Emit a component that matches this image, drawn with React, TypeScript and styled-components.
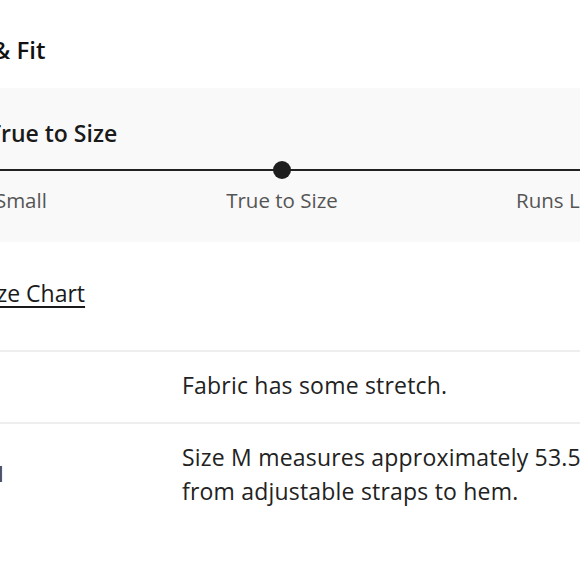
import React from "react";
import styled, { createGlobalStyle } from "styled-components";

const Global = createGlobalStyle`
  html, body { margin: 0; padding: 0; background: #ffffff; overflow: hidden; }
  body { font-family: "Open Sans", Arial, sans-serif; color: #222222; }
`;

const Page = styled.div`
  width: 700px;
  margin-left: -61px;
  padding-top: 34px;
`;

const Title = styled.h2`
  margin: 0;
  padding-left: 2px;
  font-size: 24px;
  line-height: 32px;
  font-weight: 600;
  color: #111111;
`;

const Panel = styled.section`
  margin-top: 22px;
  background: #f9f9f9;
  padding: 31px 49px 30px;
`;

const FitHeading = styled.h3`
  margin: 0;
  font-size: 23px;
  line-height: 28px;
  font-weight: 600;
  color: #1a1a1a;
`;

const Scale = styled.div`
  margin: 14px -32px 0 -46px;
`;

const Track = styled.div`
  height: 18px;
  display: flex;
  align-items: center;
  justify-content: center;
  background: linear-gradient(#222222, #222222) center / 100% 2px no-repeat;
`;

const Knob = styled.span`
  width: 18px;
  height: 18px;
  border-radius: 50%;
  background: #1e1e1e;
`;

const Labels = styled.div`
  margin-top: 9px;
  display: grid;
  grid-template-columns: 1fr 1fr 1fr;
  font-size: 20.5px;
  line-height: 24px;
  color: #555555;
`;

const ScaleLabel = styled.span<{ $align: "left" | "center" | "right" }>`
  text-align: ${(p) => p.$align};
`;

const LinkRow = styled.div`
  margin-top: 37px;
  padding-left: 39px;
`;

const ChartLink = styled.a`
  font-size: 23px;
  line-height: 28px;
  color: #1a1a1a;
  text-decoration: underline;
  text-underline-offset: 4px;
  text-decoration-thickness: 1.5px;
`;

const Table = styled.div`
  margin-top: 43px;
`;

const Row = styled.div`
  display: grid;
  grid-template-columns: 243px 1fr;
  align-items: center;
  border-top: 2px solid #eeeeee;
  padding: 16px 0 20px;
  font-size: 23px;
  line-height: 34px;
  letter-spacing: 0.2px;
  color: #222222;
`;

const RowLabel = styled.div`
  padding-left: 3px;
  font-size: 21px;
  letter-spacing: 0;
  color: #333333;
`;

const RowValue = styled.div``;

export default function App() {
  return (
    <>
      <Global />
      <Page>
        <Title>Size &amp; Fit</Title>
        <Panel>
          <FitHeading>True to Size</FitHeading>
          <Scale>
            <Track>
              <Knob />
            </Track>
            <Labels>
              <ScaleLabel $align="left">Runs Small</ScaleLabel>
              <ScaleLabel $align="center">True to Size</ScaleLabel>
              <ScaleLabel $align="right">Runs Large</ScaleLabel>
            </Labels>
          </Scale>
        </Panel>
        <LinkRow>
          <ChartLink href="#">Size Chart</ChartLink>
        </LinkRow>
        <Table>
          <Row>
            <RowLabel>Feel</RowLabel>
            <RowValue>Fabric has some stretch.</RowValue>
          </Row>
          <Row>
            <RowLabel>Model</RowLabel>
            <RowValue>
              Size M measures approximately 53.5" from adjustable straps to hem.
            </RowValue>
          </Row>
        </Table>
      </Page>
    </>
  );
}
